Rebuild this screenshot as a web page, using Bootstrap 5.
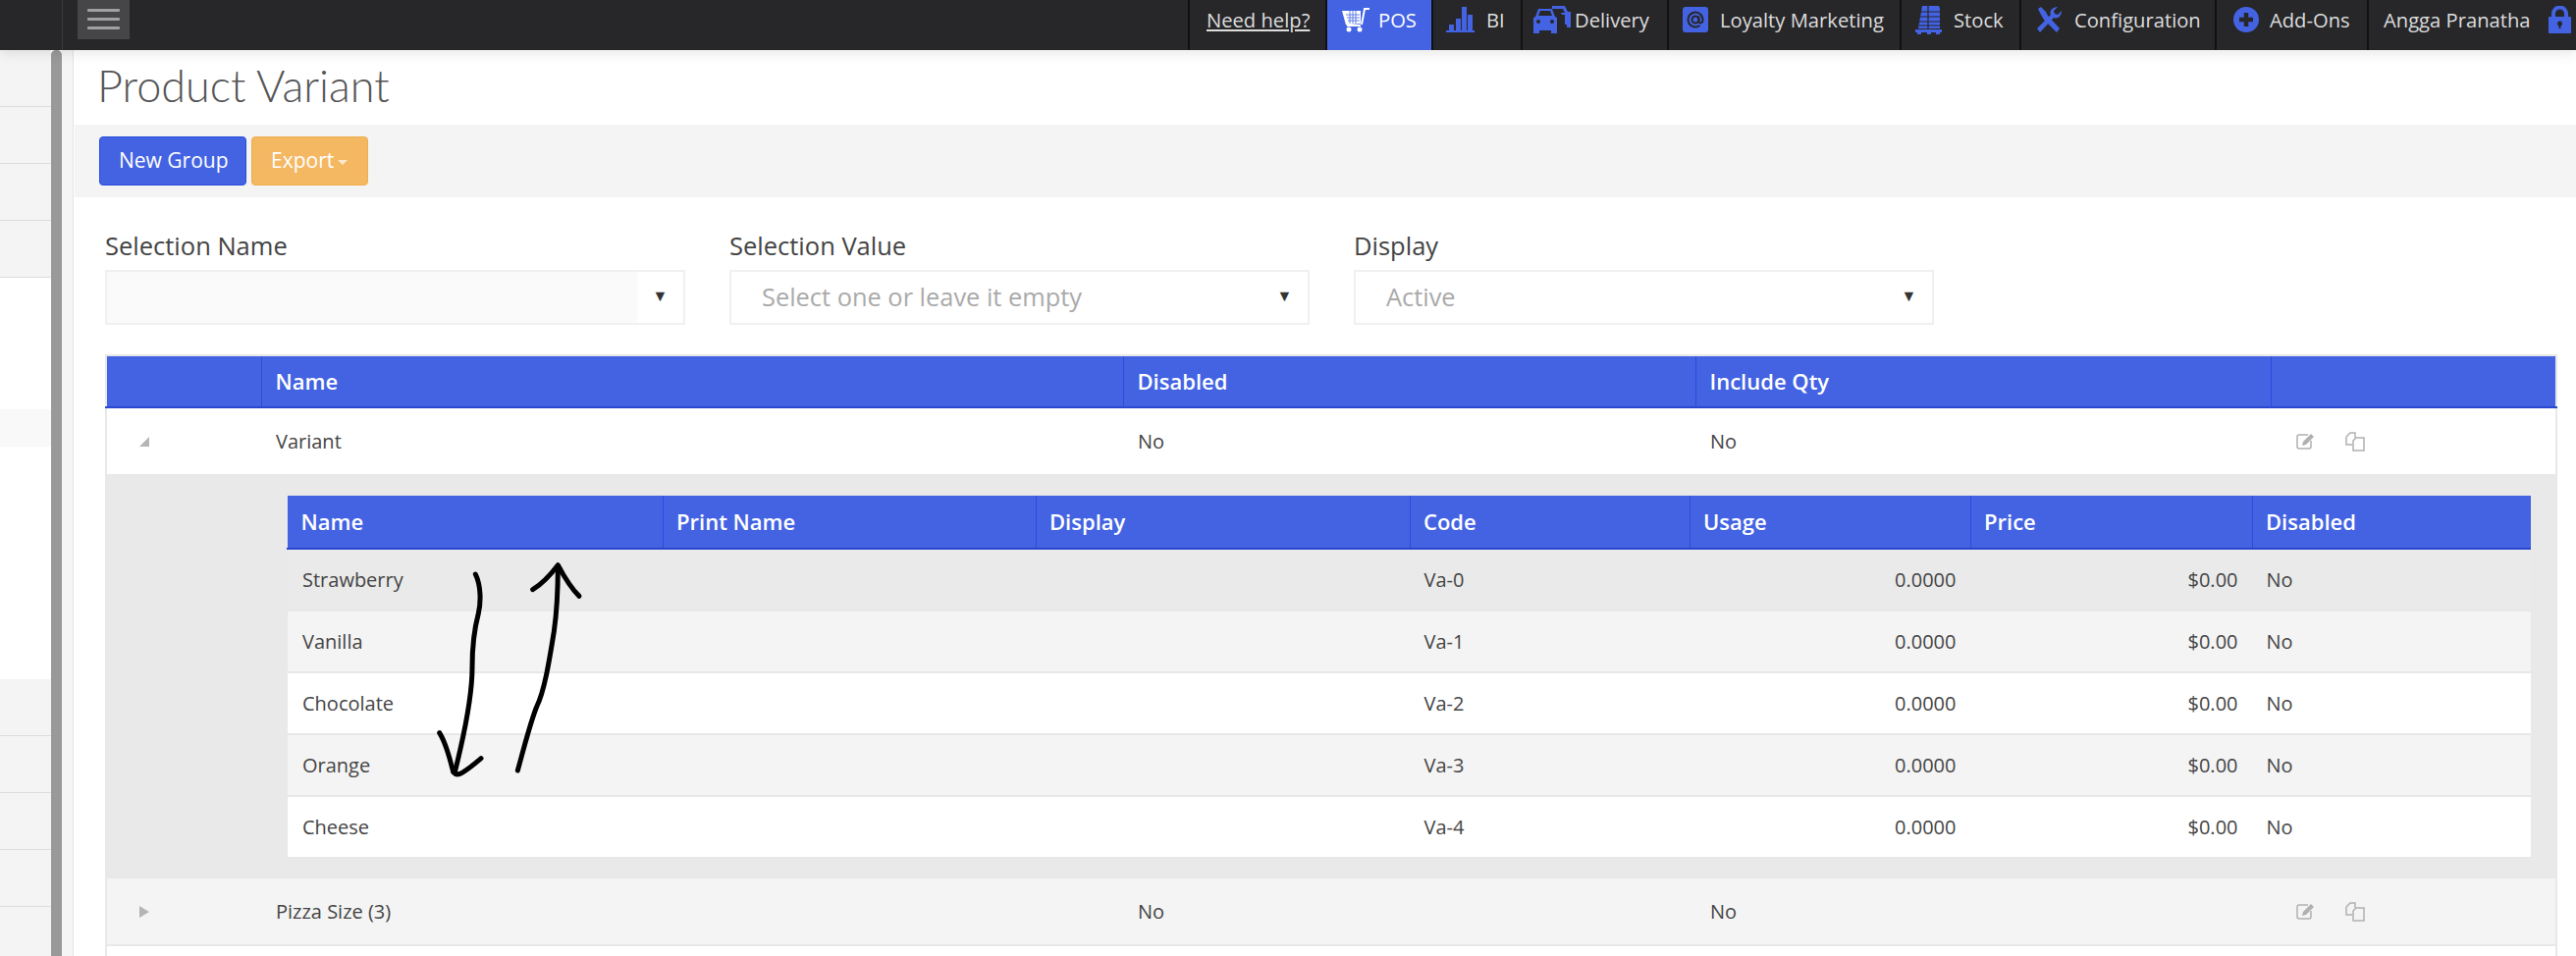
<!DOCTYPE html>
<html lang="en"><head><meta charset="utf-8"><title>Product Variant</title>
<link href="https://cdn.jsdelivr.net/npm/bootstrap@5.3.0/dist/css/bootstrap.min.css" rel="stylesheet">
<style>
html,body{height:974px;overflow:hidden}
body{font-family:"Open Sans","Liberation Sans",sans-serif;color:#444;background:#fff;position:relative}
.topbar{height:51px;background:#27272a;position:relative;z-index:2;box-shadow:0 3px 12px rgba(0,0,0,.1);color:#ddd;font-size:20.2px}
.burger-cell{width:64px;border-right:1px solid #3a3a3d;height:51px;flex:none}
.burger{width:53px;height:40px;background:#464648;margin-left:15px;flex:none;padding-top:9px}
.burger span{display:block;height:3px;width:33px;background:#a0a0a0;margin:0 auto 6px;border-radius:1px}
.nv{height:51px;padding-bottom:11px;border-left:2px solid #111;flex:none}
.nv svg{flex:none}
.nv-help{width:140px;padding-left:17px;text-decoration:underline;color:#ddd}
.nv-pos{width:108px;padding-left:15px;gap:9px;background:#4363e3;color:#fff}
.nv-bi{width:91px;padding-left:13px;gap:12px}
.nv-del{width:149px;padding-left:10px;gap:3px}
.nv-loy{width:237px;padding-left:14px;gap:12px}
.nv-sto{width:122px;padding-left:14px;gap:12px}
.nv-con{width:199px;padding-left:16px;gap:13px}
.nv-add{width:155px;padding-left:17px;gap:11px}
.nv-usr{width:213px;padding-left:15px;gap:18px}
.shell{height:923px}
.side{width:52px;flex:none}
.srow{height:58px;background:#f4f4f4;border-bottom:1px solid #ddd}
.sgap{height:409px;background:#fff;padding-top:134px}
.shigh{height:38px;background:#f9f9f9}
.sbar{width:11px;background:#999;border-radius:5px 5px 0 0;flex:none}
.strip{width:12px;background:#f5f5f5;border-right:1px solid #e4e4e4;flex:none}
.pagebody{min-width:0}
.ptitle{font-family:Lato,"Open Sans",sans-serif;font-weight:300;font-size:45px;line-height:73px;height:76px;margin:0;padding-left:24px;color:#555}
.tools{height:74px;background:#f4f4f4;margin-left:1px;padding-left:25px;gap:5px}
.bb{font-size:21px;height:50px;color:#fff;border-radius:4px;padding:0 19px;display:flex;align-items:center;white-space:nowrap}
.bb-blue{width:150px;background:#4363e3;border:1px solid #2a4ddc}
.bb-blue:hover{background:#4363e3;color:#fff}
.bb-or{width:119px;background:#f4b862;border:1px solid #efae4f}
.caret-d{display:inline-block;border:5px solid transparent;border-top-color:#fbe9cd;border-bottom:0;margin-left:4px;margin-top:3px}
.filters{padding:42px 0 0 32px;gap:45px;height:160px}
.fbox{width:591px}
.flabel{font-size:25.5px;line-height:32px;height:32px;margin-bottom:9px;display:block;color:#444;margin-top:-9px}
.fsel{height:56px;border:2px solid #f0f0f0;font-size:25.4px;color:#aaa;padding-left:31px;padding-bottom:1px}
.fsel-dis{padding:0;background:#fff}
.fsel-fill{background:#fafafa;height:100%;flex-grow:1}
.farrow{width:47px;flex:none;color:#333;font-size:16px;text-align:center;padding-bottom:4px}
.fsel-arrow{margin-left:auto;width:47px;color:#333;font-size:16px;text-align:center;padding-bottom:4px}
.tablewrap{padding-left:32px}
table.grid{table-layout:fixed;border-collapse:collapse;margin:0;font-size:20px;color:#444;--bs-table-bg:transparent}
.grid-main{width:2496px;border-left:2px solid #e8e8e8;border-right:2px solid #e8e8e8}
.grid-sub{width:2285px}
.grid th{background:#4363e3;color:#fff;font-weight:600;font-size:22px;height:53px;padding:0 14px;border:0;border-left:1px solid #2a4ddc;border-bottom:2px solid #2a47cf;vertical-align:middle}
.grid-sub th{height:54px;padding-left:13px}
.grid-sub th:first-child{padding-left:14px}
.grid th:first-child{border-left:0}
.grid-main>thead>tr{border-top:2px solid #e8e8e8}
.grid td{padding:0 14px;vertical-align:middle;border:0;border-bottom:2px solid #e8e8e8;box-shadow:none}
.rowmain>td{height:69px;background:#fff;padding-left:15px}
.rowmain.alt>td{background:#f4f4f4}
.grid-main>tbody>.rowmain>td:last-child{padding-left:26px}
.detail{background:#e9e9e9!important;padding:20px 26px 18px 183px!important}
.rowsub>td{height:63px;background:#fff}
.rowsub.s1>td{background:#eaeaea}
.rowsub.s2>td{background:#f4f4f4}
.grid-sub tbody td:first-child{border-left:1px solid #e8e8e8;padding-left:15px}
.num{text-align:right;padding-right:15px!important}
.tri{display:block;margin-left:18px}
.acts{gap:30px}
.ink{position:absolute;left:400px;top:560px;z-index:3;pointer-events:none}
</style></head>
<body>
<header class="topbar d-flex align-items-start">
  <div class="burger-cell"></div>
  <div class="burger"><span></span><span></span><span></span></div>
  <nav class="d-flex ms-auto">
    <a class="nv nv-help d-flex align-items-center" href="#">Need help?</a>
    <div class="nv nv-pos d-flex align-items-center">
      <svg width="28" height="26" viewBox="0 0 28 26"><path d="M0 4h19v13l-15 1.500z" fill="#fff"/><path d="M19 19H5M20 18 23 2h5" stroke="#fff" stroke-width="2" fill="none"/><circle cx="7" cy="23" r="2.500" fill="#fff"/><circle cx="18" cy="23" r="2.500" fill="#fff"/><path d="M4 8h14M5 11h13M6 14h12M8 4v13M11 4v13M14 4v13" stroke="#4363e3" stroke-width=".8"/></svg>
      <span>POS</span></div>
    <div class="nv nv-bi d-flex align-items-center">
      <svg width="29" height="26" viewBox="0 0 29 26"><path d="M0 24h29v2H0zM3 18h5v6H3zM10 12h5v12h-5zM16 0h5v24h-5zM22 8h5v16h-5z" fill="#4363e3"/></svg>
      <span>BI</span></div>
    <div class="nv nv-del d-flex align-items-center">
      <svg width="40" height="28" viewBox="0 0 40 28"><g fill="#4363e3"><path d="M20 0h13l3 6h3v16h-4v-3h-2V9h-3l-3-6h-7z"/><path d="M3 11 6 3h14l3 8 2 1v16h-6v-3H7v3H1V12z"/></g><path d="M6 10l2-5h10l2 5z" fill="#27272a"/><circle cx="6" cy="16" r="2" fill="#27272a"/><circle cx="20" cy="16" r="2" fill="#27272a"/><path d="M22 3h9l2 4H24z" fill="#27272a"/></svg>
      <span>Delivery</span></div>
    <div class="nv nv-loy d-flex align-items-center">
      <svg width="26" height="26" viewBox="0 0 26 26"><rect width="26" height="26" rx="3" fill="#4363e3"/><circle cx="13" cy="13" r="3.500" fill="none" stroke="#27272a" stroke-width="2"/><path d="M16.500 9.500v5c0 3 4 2.500 4-1.500a7.500 7.500 0 1 0-3 6" fill="none" stroke="#27272a" stroke-width="2"/></svg>
      <span>Loyalty Marketing</span></div>
    <div class="nv nv-sto d-flex align-items-center">
      <svg width="27" height="29" viewBox="0 0 27 29"><g fill="#4363e3"><path d="M7 0h17l1 3v20H3z"/><path d="M0 24h27v3H0zM2 27h4v2H2zM12 27h4v2h-4zM21 27h4v2h-4z"/></g><path d="M5 6h20M4 11h21M4 16h21M4 20h21M13 0v23" stroke="#27272a" stroke-width="1.200"/></svg>
      <span>Stock</span></div>
    <div class="nv nv-con d-flex align-items-center">
      <svg width="25" height="26" viewBox="0 0 25 26"><path d="M1 2 4 0l5 5 2 4 12 13-3 4L7 13 4 8z" fill="#4363e3"/><path d="M0 22 14 8c-2-4 2-8 7-8l-4 4 1 3 3 1 4-4c0 5-4 9-8 7L3 26z" fill="#4363e3"/></svg>
      <span>Configuration</span></div>
    <div class="nv nv-add d-flex align-items-center">
      <svg width="26" height="26" viewBox="0 0 26 26"><circle cx="13" cy="13" r="13" fill="#4363e3"/><path d="M13 6v14M6 13h14" stroke="#27272a" stroke-width="4.500"/></svg>
      <span>Add-Ons</span></div>
    <div class="nv nv-usr d-flex align-items-center">
      <span>Angga Pranatha</span>
      <svg width="23" height="28" viewBox="0 0 23 28"><path d="M5 12V8a6.500 6.500 0 0 1 13 0v4" fill="none" stroke="#4363e3" stroke-width="4"/><rect y="11" width="23" height="17" rx="1" fill="#4363e3"/><circle cx="11.500" cy="18" r="2.500" fill="#27272a"/><path d="M10.500 18h2v5h-2z" fill="#27272a"/></svg>
    </div>
  </nav>
</header>

<div class="shell d-flex">
  <aside class="side">
    <div class="srow"></div><div class="srow"></div><div class="srow"></div><div class="srow"></div>
    <div class="sgap"><div class="shigh"></div></div>
    <div class="srow"></div><div class="srow"></div><div class="srow"></div><div class="srow"></div><div class="srow"></div>
  </aside>
  <div class="sbar"></div>
  <div class="strip"></div>
  <main class="pagebody flex-grow-1">
    <h1 class="ptitle">Product Variant</h1>
    <div class="tools d-flex align-items-center">
      <button class="btn bb bb-blue" type="button">New Group</button>
      <div class="bb bb-or">Export<span class="caret-d"></span></div>
    </div>
    <div class="filters d-flex">
      <div class="fbox"><label class="flabel">Selection Name</label>
        <div class="fsel fsel-dis d-flex align-items-center"><div class="fsel-fill"></div><div class="farrow">▼</div></div></div>
      <div class="fbox"><label class="flabel">Selection Value</label>
        <div class="fsel d-flex align-items-center"><span>Select one or leave it empty</span><span class="fsel-arrow">▼</span></div></div>
      <div class="fbox"><label class="flabel">Display</label>
        <div class="fsel d-flex align-items-center"><span>Active</span><span class="fsel-arrow">▼</span></div></div>
    </div>
    <div class="tablewrap">
      <table class="table grid grid-main">
        <colgroup><col width="158"><col width="878"><col width="583"><col width="586"><col width="291"></colgroup>
        <thead><tr><th></th><th>Name</th><th>Disabled</th><th>Include Qty</th><th></th></tr></thead>
        <tbody>
          <tr class="rowmain">
            <td><svg class="tri" width="10" height="10" viewBox="0 0 10 10"><path d="M10 0v10H0z" fill="#b5b5b5"/></svg></td>
            <td>Variant</td><td>No</td><td>No</td>
            <td><div class="d-flex acts">
              <svg width="20" height="18" viewBox="0 0 20 18"><path d="M12 3H3a2 2 0 0 0-2 2v10a2 2 0 0 0 2 2h10a2 2 0 0 0 2-2V9" fill="none" stroke="#b0b0b0" stroke-width="1.500"/><path d="M7 10 15 2l3 3-8 8-4 1z" fill="#b0b0b0"/></svg>
              <svg width="20" height="20" viewBox="0 0 20 20"><path d="M7 13H1V5l4-4h5v5" fill="none" stroke="#b0b0b0" stroke-width="1.500"/><path d="M8 19V9l3-3h8v13z" fill="none" stroke="#b0b0b0" stroke-width="1.500"/></svg>
            </div></td>
          </tr>
          <tr><td colspan="5" class="detail">
            <table class="table grid grid-sub">
              <colgroup><col width="383"><col width="380"><col width="381"><col width="285"><col width="286"><col width="287"><col width="283"></colgroup>
              <thead><tr><th>Name</th><th>Print Name</th><th>Display</th><th>Code</th><th>Usage</th><th>Price</th><th>Disabled</th></tr></thead>
              <tbody>
                <tr class="rowsub s1"><td>Strawberry</td><td></td><td></td><td>Va-0</td><td class="num">0.0000</td><td class="num">$0.00</td><td>No</td></tr>
                <tr class="rowsub s2"><td>Vanilla</td><td></td><td></td><td>Va-1</td><td class="num">0.0000</td><td class="num">$0.00</td><td>No</td></tr>
                <tr class="rowsub"><td>Chocolate</td><td></td><td></td><td>Va-2</td><td class="num">0.0000</td><td class="num">$0.00</td><td>No</td></tr>
                <tr class="rowsub s2"><td>Orange</td><td></td><td></td><td>Va-3</td><td class="num">0.0000</td><td class="num">$0.00</td><td>No</td></tr>
                <tr class="rowsub"><td>Cheese</td><td></td><td></td><td>Va-4</td><td class="num">0.0000</td><td class="num">$0.00</td><td>No</td></tr>
              </tbody>
            </table>
          </td></tr>
          <tr class="rowmain alt">
            <td><svg class="tri" width="10" height="12" viewBox="0 0 10 12"><path d="M0 0l10 6-10 6z" fill="#b5b5b5"/></svg></td>
            <td>Pizza Size (3)</td><td>No</td><td>No</td>
            <td><div class="d-flex acts">
              <svg width="20" height="18" viewBox="0 0 20 18"><path d="M12 3H3a2 2 0 0 0-2 2v10a2 2 0 0 0 2 2h10a2 2 0 0 0 2-2V9" fill="none" stroke="#b0b0b0" stroke-width="1.500"/><path d="M7 10 15 2l3 3-8 8-4 1z" fill="#b0b0b0"/></svg>
              <svg width="20" height="20" viewBox="0 0 20 20"><path d="M7 13H1V5l4-4h5v5" fill="none" stroke="#b0b0b0" stroke-width="1.500"/><path d="M8 19V9l3-3h8v13z" fill="none" stroke="#b0b0b0" stroke-width="1.500"/></svg>
            </div></td>
          </tr>
          <tr class="rowmain"><td></td><td></td><td></td><td></td><td></td></tr>
        </tbody>
      </table>
    </div>
  </main>
</div>

<svg class="ink" width="200" height="240" viewBox="0 0 600 720" fill="none" stroke="#000" stroke-width="15" stroke-linecap="round" stroke-linejoin="round">
  <path d="M253 75C270 110 270 160 262 195C250 240 243 300 243 360C243 440 225 540 190 680"/>
  <path d="M143 560C165 595 175 640 185 680Q195 692 212 682C235 668 250 655 270 638"/>
  <path d="M382 675C400 610 420 530 440 480C465 430 480 330 493 250C503 180 505 110 505 50"/>
  <path d="M428 122C455 105 480 80 505 47C525 85 545 118 570 142"/>
</svg>
</body></html>
